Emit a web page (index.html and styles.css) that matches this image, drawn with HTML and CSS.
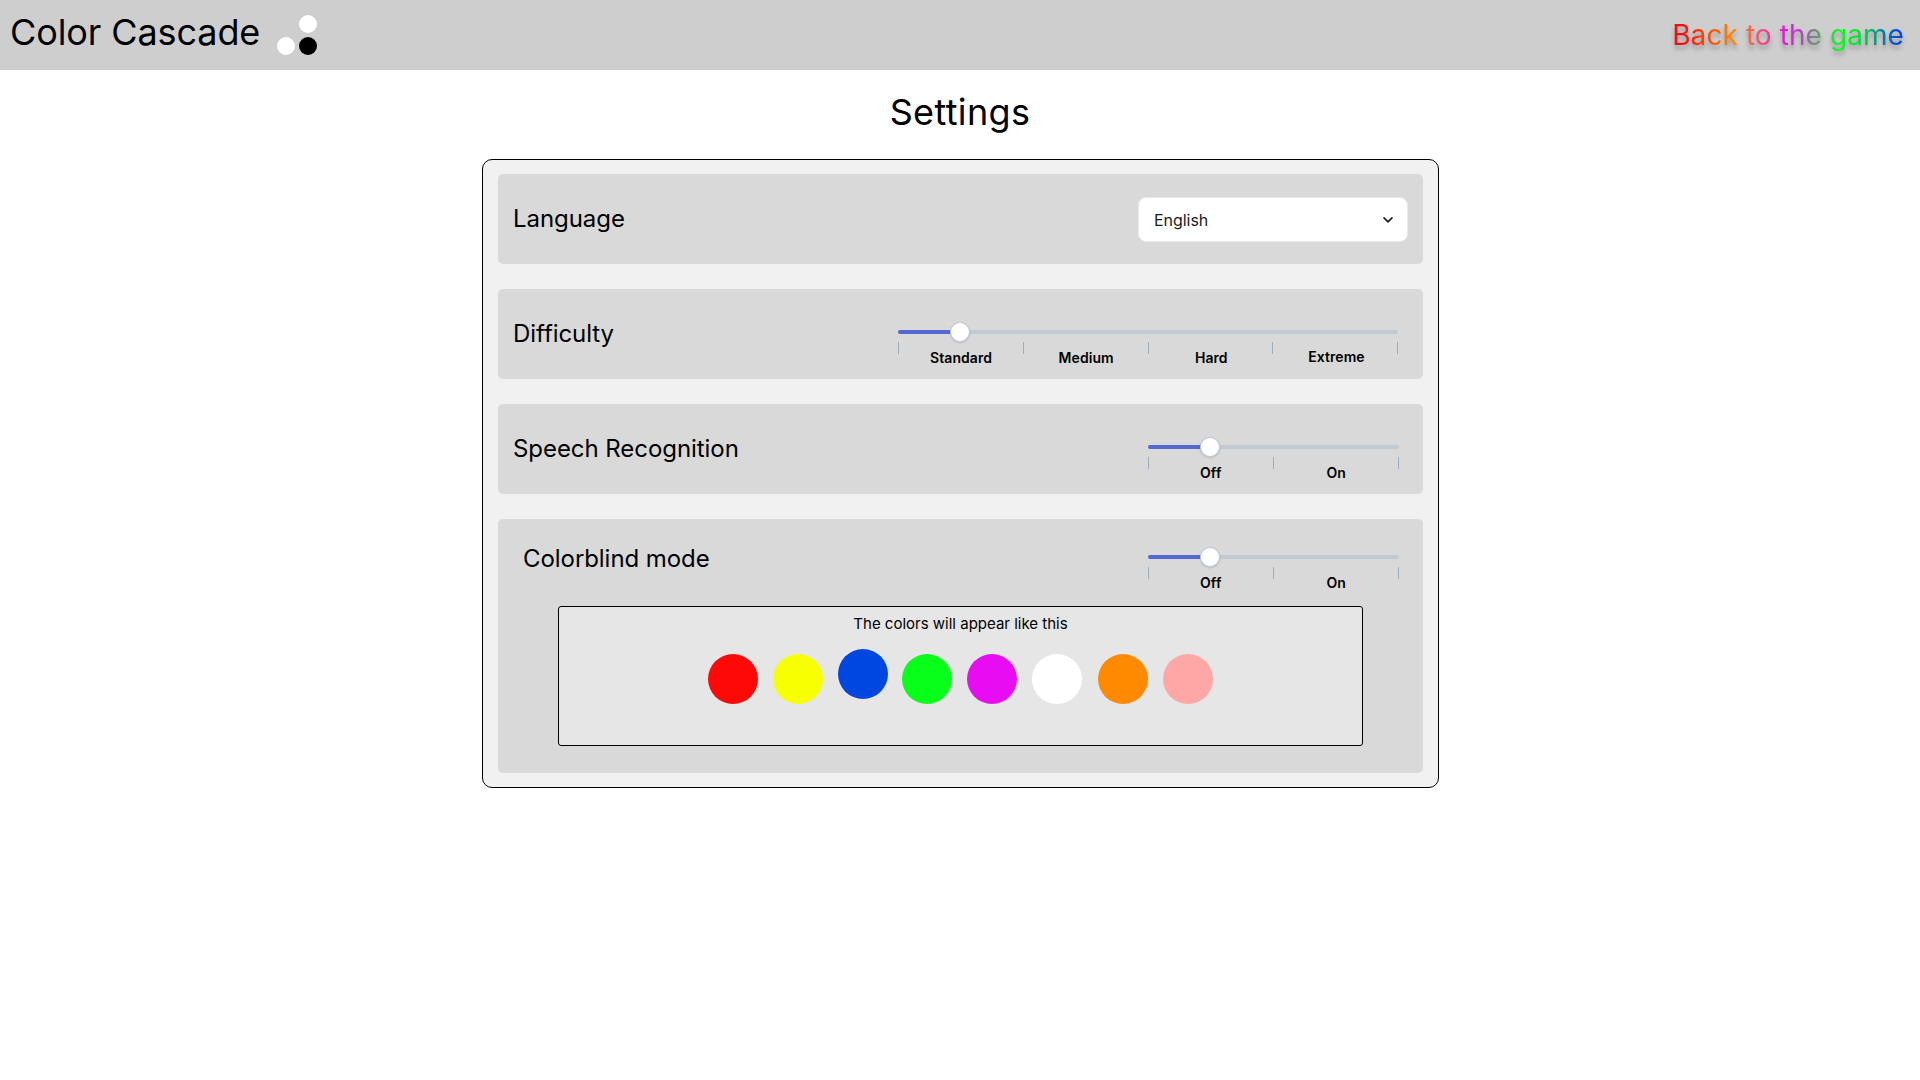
FILE: index.html
```html
<!DOCTYPE html>
<html lang="en">
<head>
<meta charset="utf-8">
<title>Color Cascade – Settings</title>
<link rel="stylesheet" href="styles.css">
</head>
<body>
<header class="topbar">
  <div class="brand">
    <span class="brand-name">Color Cascade</span>
    <svg class="logo" viewBox="0 0 40 40" width="40" height="40" aria-hidden="true">
      <circle cx="31" cy="9" r="9" fill="#fff"/>
      <circle cx="9" cy="31" r="9" fill="#fff"/>
      <circle cx="31" cy="31" r="9" fill="#000"/>
    </svg>
  </div>
  <a class="back"><span class="back-text">Back to the game</span></a>
</header>
<main>
  <h1 class="title">Settings</h1>
  <section class="panel">
    <div class="row row-language">
      <span class="label">Language</span>
      <div class="select">
        <span>English</span>
        <svg width="10" height="6" viewBox="0 0 10 6" fill="none" stroke="#1b1b1f" stroke-width="1.6" stroke-linecap="round" stroke-linejoin="round"><path d="M1 .9l4 4 4-4"/></svg>
      </div>
    </div>
    <div class="row">
      <span class="label">Difficulty</span>
      <div class="slider slider-wide">
        <div class="track"><div class="fill"></div><div class="thumb"></div></div>
        <div class="ticks"><i></i><i></i><i></i><i></i><i></i></div>
        <div class="steps"><span>Standard</span><span>Medium</span><span>Hard</span><span class="raised">Extreme</span></div>
      </div>
    </div>
    <div class="row">
      <span class="label">Speech Recognition</span>
      <div class="slider">
        <div class="track"><div class="fill"></div><div class="thumb"></div></div>
        <div class="ticks"><i></i><i></i><i></i></div>
        <div class="steps"><span>Off</span><span>On</span></div>
      </div>
    </div>
    <div class="card">
      <div class="row row-inner">
        <span class="label">Colorblind mode</span>
        <div class="slider">
          <div class="track"><div class="fill"></div><div class="thumb"></div></div>
          <div class="ticks"><i></i><i></i><i></i></div>
          <div class="steps"><span>Off</span><span>On</span></div>
        </div>
      </div>
      <div class="preview">
        <p class="caption">The colors will appear like this</p>
        <div class="colors">
          <span class="dot red"></span><span class="dot yellow"></span><span class="dot blue"></span><span class="dot green"></span><span class="dot magenta"></span><span class="dot white"></span><span class="dot orange"></span><span class="dot pink"></span>
        </div>
      </div>
    </div>
  </section>
</main>
</body>
</html>
```
FILE: styles.css
```css
* { box-sizing: border-box; }
body {
  margin: 0;
  background: #fff;
  color: #000;
  font-family: Inter, "Liberation Sans", sans-serif;
}
.topbar {
  height: 70px;
  background: #cecece;
  display: flex;
  justify-content: space-between;
  align-items: flex-start;
  padding: 0 16px 0 10px;
}
.brand { display: flex; }
.brand-name {
  width: 267px;
  padding-top: 10px;
  font-size: 36px;
  line-height: 44px;
  letter-spacing: -.1px;
  white-space: nowrap;
}
.logo { margin-top: 15px; }
.back {
  margin-top: 18px;
  font-size: 28px;
  line-height: 34px;
  letter-spacing: .08px;
  filter: drop-shadow(0 4px 2px rgba(0, 0, 0, .25));
}
.back-text {
  display: block;
  background: linear-gradient(90deg, #ff0808 4%, #ff8a00 27%, #e80cf2 50%, #08ff1a 72%, #00e62e 80%, #0047e1 97%);
  -webkit-background-clip: text;
  background-clip: text;
  color: transparent;
}
.title {
  margin: 20px 0 25px;
  font-size: 36px;
  line-height: 44px;
  letter-spacing: .35px;
  font-weight: 400;
  text-align: center;
}
.panel {
  width: 957px;
  height: 629px;
  margin-left: 482px;
  padding: 14px 15px;
  border: 1px solid #000;
  border-radius: 10px;
  background: #f1f1f1;
  display: flex;
  flex-direction: column;
  gap: 25px;
}
.row {
  height: 90px;
  padding: 0 24px 0 15px;
  border-radius: 5px;
  background: #d9d9d9;
  display: flex;
  justify-content: space-between;
  align-items: flex-start;
}
.row-language { padding-right: 15px; }
.label {
  margin-top: 30px;
  font-size: 24px;
  line-height: 29px;
  letter-spacing: -.06px;
}
.select {
  width: 270px;
  height: 45px;
  margin-top: 23px;
  padding: 0 14px 0 15px;
  border: 1px solid #e9e9ea;
  border-radius: 8px;
  background: #fff;
  color: #1b1b1f;
  font-size: 16px;
  letter-spacing: -.05px;
  display: flex;
  align-items: center;
  justify-content: space-between;
}
.slider { width: 251px; padding-top: 41px; }
.slider-wide { width: 500px; margin-right: 1px; }
.track {
  height: 4px;
  border-radius: 2px;
  background: #c1c9d2;
  display: flex;
  align-items: center;
}
.fill {
  width: 53px;
  height: 4px;
  border-radius: 2px 0 0 2px;
  background: #5468d4;
}
.thumb {
  width: 19.6px;
  height: 20px;
  margin-left: -.6px;
  border: 1px solid #c1c9d2;
  border-radius: 50%;
  background: #fff;
  box-shadow: 0 1px 2px rgba(60, 66, 87, .2);
}
.ticks {
  margin-top: 8px;
  display: flex;
  justify-content: space-between;
}
.ticks i { width: 1px; height: 12px; background: #a3acb9; }
.steps {
  display: flex;
  margin-top: -5px;
  font-size: 14px;
  line-height: 17px;
  font-weight: 600;
  letter-spacing: .2px;
  text-align: center;
}
.slider-wide .steps { margin-left: .5px; margin-right: -1px; letter-spacing: .06px; }
.steps span { flex: 1 1 0; }
.steps .raised { margin-top: -1px; }
.card {
  height: 254px;
  border-radius: 5px;
  background: #d9d9d9;
}
.row-inner { height: 87px; padding-left: 25px; }
.row-inner .label { margin-top: 25px; }
.row-inner .slider { padding-top: 36px; }
.preview {
  width: 805px;
  height: 140px;
  margin-left: 60px;
  border: 1px solid #000;
  border-radius: 3px;
  background: #e6e6e6;
}
.caption {
  margin: 7px 0 21px;
  font-size: 15px;
  line-height: 19px;
  text-align: center;
}
.colors {
  display: grid;
  grid-template-columns: 65px 65px 64px 65px 65px 66px 65px 50px;
  padding-left: 149px;
}
.dot { width: 50px; height: 50px; border-radius: 50%; }
.red { background: #ff0808; }
.yellow { background: #f7ff00; }
.blue { background: #0047e1; margin-top: -5px; }
.green { background: #08ff1a; }
.magenta { background: #e80cf2; }
.white { background: #fff; }
.orange { background: #ff8a00; }
.pink { background: #ffa6a6; }
```
